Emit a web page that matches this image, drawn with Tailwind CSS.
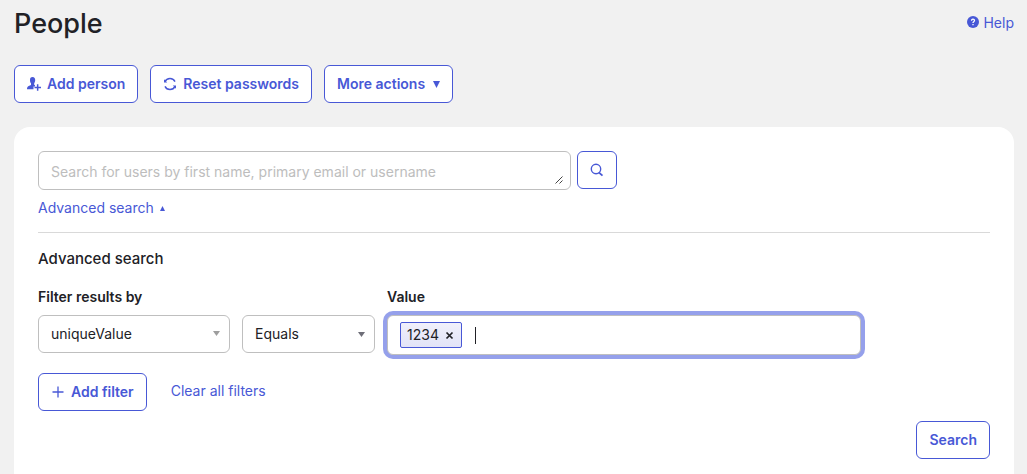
<!DOCTYPE html>
<html lang="en">
<head>
<meta charset="utf-8">
<meta name="viewport" content="width=device-width, initial-scale=1">
<title>People</title>
<script src="https://cdn.jsdelivr.net/npm/@tailwindcss/browser@4"></script>
</head>
<body class="min-h-screen bg-[#f1f1f1] pr-[13px] pl-3.5 font-['Inter',sans-serif] text-sm text-[#212126]">
<div class="flex min-h-screen flex-col">
  <header class="flex h-12 items-start justify-between pt-1">
    <h1 class="text-[27px] leading-10 font-medium">People</h1>
    <a href="#" class="mt-[9px] flex items-center gap-1 leading-5 text-[#4858d6]">
      <svg class="-mt-0.5 size-3" viewBox="0 0 12 12" aria-hidden="true"><circle cx="6" cy="6" r="6" fill="currentColor"/><path d="M4.500 4.700c0-2 3-2 3-.1 0 1.100-1.500 1.100-1.500 2.300M6 8v1.200" fill="none" stroke="#fff" stroke-width="1.300"/></svg>
      Help
    </a>
  </header>

  <div class="mt-[17px] flex gap-3 font-semibold text-[#4858d6]">
    <button type="button" class="flex h-[38px] items-center gap-1.5 rounded-md border border-[#4858d6] bg-white px-3">
      <svg class="h-3.5 w-3.5" viewBox="0 0 14 14" fill="currentColor" aria-hidden="true"><path d="M5.500 0C7.500 0 8.300 1.300 8.200 3.200 8.100 4.800 7.600 5.600 7.200 6.200v1.500l.8.500v1.300H6.500v2.800H0c0-2 .5-2.900 1.700-3.400L4 7.900V6.300C3.400 5.600 3 4.600 3 3.200 2.900 1.200 3.800 0 5.500 0Z"/><path d="M9.900 7.200h1.500v2.500H14v1.500h-2.600v2.600H9.900v-2.600H7.500V9.700h2.400Z"/></svg>
      Add person
    </button>
    <button type="button" class="flex h-[38px] items-center gap-1.5 rounded-md border border-[#4858d6] bg-white px-3">
      <svg class="h-3.5 w-3.5" viewBox="0 0 14 14" fill="none" stroke="currentColor" stroke-width="1.400" aria-hidden="true"><path d="M2 4.600C2.900 2.500 4.700 1.500 7 1.500s4.100 1 5 3.100M12 9.400c-.9 2.100-2.700 3.100-5 3.100s-4.100-1-5-3.100"/><path d="M1 2.200v3.200h3.200ZM13 11.800V8.600H9.800Z" fill="currentColor" stroke="none"/></svg>
      Reset passwords
    </button>
    <button type="button" class="flex h-[38px] items-center gap-2 rounded-md border border-[#4858d6] bg-white px-3">
      More actions
      <svg class="h-[7px] w-[7px]" viewBox="0 0 7 7" fill="currentColor" aria-hidden="true"><path d="M0 0h7L3.500 7Z"/></svg>
    </button>
  </div>

  <main class="mt-6 grow rounded-t-2xl bg-white px-6 pt-6 pb-[15px]">
    <div class="flex gap-1.5">
      <div class="relative w-[56%]">
        <textarea rows="1" aria-label="Search for users" placeholder="Search for users by first name, primary email or username" class="block h-[39px] w-full resize-none overflow-hidden rounded-md border border-[#bfbfbf] px-3 pt-[10px] leading-5 placeholder:text-[#bdbdbd]"></textarea>
        <svg class="pointer-events-none absolute right-2 bottom-1.5 size-2" viewBox="0 0 8 8" fill="none" stroke="#444" stroke-width="1" aria-hidden="true"><path d="M0.500 7.500l7-7M4.500 7.500l3-3"/></svg>
      </div>
      <button type="button" aria-label="Search users" class="flex h-[38px] w-10 items-center justify-center rounded-md border border-[#4858d6] text-[#4858d6]">
        <svg class="size-3.5" viewBox="0 0 14 14" fill="none" stroke="currentColor" stroke-width="1.400" aria-hidden="true"><circle cx="6" cy="6" r="4.700"/><path d="m8.800 9.300 3.700 3.300" stroke-width="1.800"/></svg>
      </button>
    </div>
    <a href="#" class="mt-2 flex items-center gap-1.5 leading-5 text-[#4858d6]">
      Advanced search
      <svg class="h-[5px] w-[5px]" viewBox="0 0 5 5" fill="currentColor" aria-hidden="true"><path d="M2.500 0 5 5H0Z"/></svg>
    </a>
    <hr class="mt-3.5 border-[#d9d9d9]">
    <h2 class="mt-4 text-[15px] leading-5 font-medium">Advanced search</h2>

    <form>
      <div class="mt-[18px] flex gap-3">
        <div class="w-48">
          <label for="field" class="block leading-5 font-semibold">Filter results by</label>
          <div class="relative mt-2">
            <select id="field" class="h-[38px] w-full appearance-none rounded-md border border-[#bfbfbf] bg-white px-3"><option>uniqueValue</option></select>
            <svg class="pointer-events-none absolute top-4 right-2.5 h-[5px] w-[7px] text-[#9e9e9e]" viewBox="0 0 7 5" fill="currentColor" aria-hidden="true"><path d="M0 0h7L3.500 5Z"/></svg>
          </div>
        </div>
        <div class="relative mt-7 w-[133px]">
          <select aria-label="Operator" class="h-[38px] w-full appearance-none rounded-md border border-[#bfbfbf] bg-white px-3"><option>Equals</option></select>
          <svg class="pointer-events-none absolute top-[17px] right-2.5 h-[5px] w-[7px] text-[#6e6e78]" viewBox="0 0 7 5" fill="currentColor" aria-hidden="true"><path d="M0 0h7L3.500 5Z"/></svg>
        </div>
        <div class="w-1/2">
          <label for="value" class="block leading-5 font-semibold">Value</label>
          <div class="mt-2 mr-0.5 flex h-10 items-center rounded-md border border-[#bfbfbf] bg-white px-3 ring-4 ring-[#95a0eb]">
            <span class="flex h-[26px] items-center gap-1.5 rounded-xs border border-[#4858d6] bg-linear-to-b from-[#f0f0fb] to-[#e2e3f7] pr-[7px] pl-1.5">
              1234
              <button type="button" aria-label="Remove 1234"><svg class="size-[9px]" viewBox="0 0 9 9" fill="none" stroke="currentColor" stroke-width="1.700" aria-hidden="true"><path d="m1.500 1.500 6 6m0-6-6 6"/></svg></button>
            </span>
            <span class="ml-[13px] h-[17px] w-px bg-[#212126]"></span>
            <input id="value" type="text" class="min-w-0 grow caret-transparent outline-none">
          </div>
        </div>
      </div>

      <div class="mt-[18px] flex items-start gap-6 text-[#4858d6]">
        <button type="button" class="flex h-[38px] items-center gap-1.5 rounded-md border border-[#4858d6] px-3 font-semibold">
          <svg class="size-3.5" viewBox="0 0 14 14" fill="none" stroke="currentColor" stroke-width="1.300" aria-hidden="true"><path d="M7 1.500v11M1.500 7h11"/></svg>
          Add filter
        </button>
        <a href="#" class="mt-2 leading-5">Clear all filters</a>
      </div>
      <div class="mt-2.5 flex justify-end">
        <button type="submit" class="h-[38px] rounded-md border border-[#4858d6] px-3 font-semibold text-[#4858d6]">Search</button>
      </div>
    </form>
  </main>
</div>
</body>
</html>
